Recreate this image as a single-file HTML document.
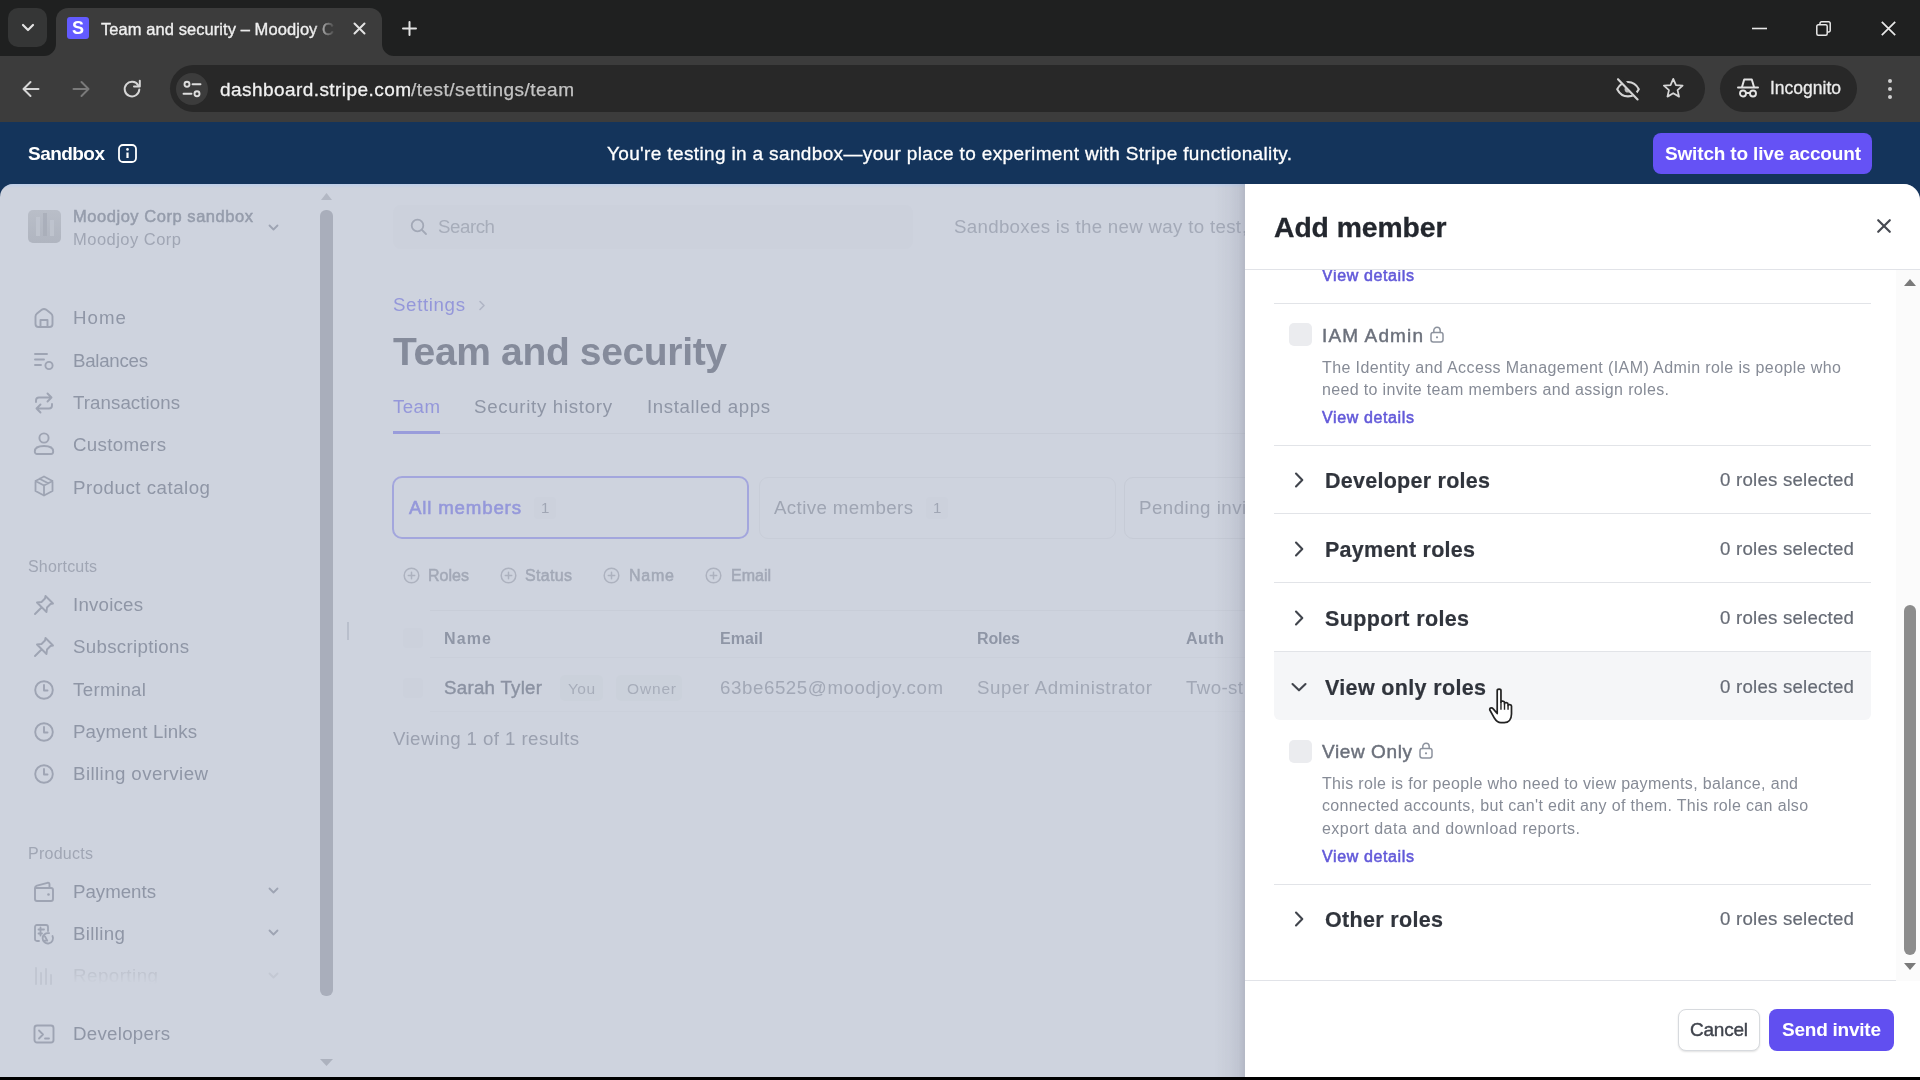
<!DOCTYPE html>
<html><head><meta charset="utf-8"><title>Team and security</title><style>
html,body{margin:0;padding:0;width:1920px;height:1080px;overflow:hidden;background:#000}
body{font-family:"Liberation Sans",sans-serif;position:relative}
.t{position:absolute;white-space:nowrap;will-change:transform}
.b{position:absolute}
svg{overflow:visible}
</style></head><body>
<div class="b" style="left:0;top:0;width:1920px;height:56px;background:#1f2020"></div>
<div class="b" style="left:8px;top:8px;width:39px;height:39px;border-radius:10px;background:#353636"></div>
<svg style="position:absolute;left:20px;top:21px;" width="16" height="14" viewBox="0 0 16 14" fill="none"><path d="M3 4 L8 9 L13 4" stroke="#e3e3e3" stroke-width="2.2" stroke-linecap="round" stroke-linejoin="round" /></svg>
<div class="b" style="left:56px;top:8px;width:326px;height:48px;border-radius:12px 12px 0 0;background:#3c3c3c"></div>
<svg class="b" style="left:44px;top:44px" width="12" height="12"><path d="M12 0 V12 H0 A12 12 0 0 0 12 0Z" fill="#3c3c3c"/></svg>
<svg class="b" style="left:382px;top:44px" width="12" height="12"><path d="M0 0 V12 H12 A12 12 0 0 1 0 0Z" fill="#3c3c3c"/></svg>
<div class="b" style="left:67px;top:17px;width:22px;height:22px;border-radius:3px;background:#635bff"></div>
<span id="fav" class="t" style="left:71.5px;top:17.0px;font-size:18px;line-height:23px;color:#ffffff;font-weight:700;letter-spacing:0.000px;">S</span>
<span id="tabtitle" class="t" style="left:101px;top:18.5px;font-size:16.5px;line-height:21px;color:#efefef;font-weight:400;letter-spacing:0.068px;-webkit-mask-image:linear-gradient(90deg,#000 91%,transparent 101%);-webkit-text-stroke:0.35px #efefef;">Team and security – Moodjoy C</span>
<svg style="position:absolute;left:353px;top:22px;" width="13" height="13" viewBox="0 0 13 13" fill="none"><path d="M1.5 1.5 L11.5 11.5 M11.5 1.5 L1.5 11.5" stroke="#e3e3e3" stroke-width="2" stroke-linecap="round" stroke-linejoin="round" /></svg>
<svg style="position:absolute;left:402px;top:21px;" width="15" height="15" viewBox="0 0 15 15" fill="none"><path d="M7.5 1 V14 M1 7.5 H14" stroke="#e3e3e3" stroke-width="2" stroke-linecap="round" stroke-linejoin="round" /></svg>
<svg style="position:absolute;left:1752px;top:27px;" width="15" height="3" viewBox="0 0 15 3" fill="none"><path d="M0 1.5 H15" stroke="#e8e8e8" stroke-width="1.6"/></svg>
<svg style="position:absolute;left:1816px;top:21px;" width="15" height="15" viewBox="0 0 15 15" fill="none"><rect x="0.8" y="3.8" width="10.4" height="10.4" rx="1.5" stroke="#e8e8e8" stroke-width="1.5"/><path d="M4 3.5 V2.3 A1.5 1.5 0 0 1 5.5 0.8 H12.7 A1.5 1.5 0 0 1 14.2 2.3 V9.5 A1.5 1.5 0 0 1 12.7 11 H11.5" stroke="#e8e8e8" stroke-width="1.5"/></svg>
<svg style="position:absolute;left:1881px;top:21px;" width="15" height="15" viewBox="0 0 15 15" fill="none"><path d="M0.8 0.8 L14.2 14.2 M14.2 0.8 L0.8 14.2" stroke="#e8e8e8" stroke-width="1.7"/></svg>
<div class="b" style="left:0;top:56px;width:1920px;height:66px;background:#3c3c3c"></div>
<svg style="position:absolute;left:22px;top:80px;" width="18" height="18" viewBox="0 0 18 18" fill="none"><path d="M16.5 9 H2 M8.5 2 L1.5 9 L8.5 16" stroke="#d6d6d6" stroke-width="2" stroke-linecap="round" stroke-linejoin="round" /></svg>
<svg style="position:absolute;left:72px;top:80px;" width="18" height="18" viewBox="0 0 18 18" fill="none"><path d="M1.5 9 H16 M9.5 2 L16.5 9 L9.5 16" stroke="#7a7a7a" stroke-width="2" stroke-linecap="round" stroke-linejoin="round" /></svg>
<svg style="position:absolute;left:122px;top:79px;" width="20" height="20" viewBox="0 0 20 20" fill="none"><path d="M16.2 6.2 A7.3 7.3 0 1 0 17.3 10.5" stroke="#d6d6d6" stroke-width="2" stroke-linecap="round" stroke-linejoin="round" /><path d="M17.8 1.8 V7.6 H12" stroke="#d6d6d6" stroke-width="2" stroke-linejoin="round" stroke-linecap="round"/></svg>
<div class="b" style="left:170px;top:65px;width:1534.5px;height:46.5px;border-radius:23.5px;background:#282828"></div>
<div class="b" style="left:175.5px;top:72.5px;width:32px;height:32px;border-radius:16px;background:#3c3c3c"></div>
<svg style="position:absolute;left:182px;top:80px;" width="20" height="18" viewBox="0 0 20 18" fill="none"><circle cx="5" cy="4.2" r="2.5" stroke="#dedede" stroke-width="1.9"/><path d="M10.5 4.2 H18.5" stroke="#dedede" stroke-width="1.9" stroke-linecap="round"/><circle cx="15" cy="13.8" r="2.5" stroke="#dedede" stroke-width="1.9"/><path d="M1.5 13.8 H9.5" stroke="#dedede" stroke-width="1.9" stroke-linecap="round"/></svg>
<span id="url1" class="t" style="left:220px;top:76.5px;font-size:19px;line-height:25px;color:#f0f0f0;font-weight:400;letter-spacing:0.436px;-webkit-text-stroke:0.3px #f0f0f0;">dashboard.stripe.com</span>
<span id="url2" class="t" style="left:411px;top:76.5px;font-size:19px;line-height:25px;color:#c4c4c4;font-weight:400;letter-spacing:0.489px;-webkit-text-stroke:0.25px #c4c4c4;">/test/settings/team</span>
<svg style="position:absolute;left:1615px;top:77px;" width="26" height="24" viewBox="0 0 26 24" fill="none"><path d="M2.2 12.2 C5 6.8 9 5 13 5 C17 5 21 6.8 23.8 12.2 C21 17.6 17 19.4 13 19.4 C9 19.4 5 17.6 2.2 12.2 Z" stroke="#d4d4d4" stroke-width="2.1" stroke-linecap="round" stroke-linejoin="round" /><circle cx="13" cy="12.2" r="3.4" fill="#bdbdbd"/><path d="M4.2 0.8 L24.2 21.8" stroke="#282828" stroke-width="5" stroke-linecap="butt"/><path d="M3 2.2 L22.6 22.4" stroke="#d4d4d4" stroke-width="2.1" stroke-linecap="round" stroke-linejoin="round" /></svg>
<svg style="position:absolute;left:1661.5px;top:77px;" width="22.5" height="21.5" viewBox="0 0 24 23" fill="none"><path d="M12 2 L14.9 8.6 L22 9.3 L16.6 14 L18.2 21 L12 17.3 L5.8 21 L7.4 14 L2 9.3 L9.1 8.6 Z" stroke="#d6d6d6" stroke-width="1.9" stroke-linecap="round" stroke-linejoin="round" /></svg>
<div class="b" style="left:1720px;top:65px;width:137px;height:46.5px;border-radius:23.5px;background:#282828"></div>
<svg style="position:absolute;left:1737px;top:77px;" width="22" height="22" viewBox="0 0 22 22" fill="none"><path d="M1 10.5 H21" stroke="#e3e3e3" stroke-width="2" stroke-linecap="round" stroke-linejoin="round" /><path d="M5 10 L7.2 2.5 H14.8 L17 10" stroke="#e3e3e3" stroke-width="2" stroke-linecap="round" stroke-linejoin="round" /><circle cx="6" cy="16.5" r="3" stroke="#e3e3e3" stroke-width="1.9"/><circle cx="16" cy="16.5" r="3" stroke="#e3e3e3" stroke-width="1.9"/><path d="M9 16 H13" stroke="#e3e3e3" stroke-width="1.9" stroke-linecap="round" stroke-linejoin="round" /></svg>
<span id="incog" class="t" style="left:1770px;top:76.5px;font-size:17.5px;line-height:23px;color:#ececec;font-weight:400;letter-spacing:-0.005px;-webkit-text-stroke:0.3px #ececec;">Incognito</span>
<div class="b" style="left:1887.5px;top:78.5px;width:4.5px;height:4.5px;border-radius:3px;background:#d0d0d0"></div>
<div class="b" style="left:1887.5px;top:86.5px;width:4.5px;height:4.5px;border-radius:3px;background:#d0d0d0"></div>
<div class="b" style="left:1887.5px;top:94.5px;width:4.5px;height:4.5px;border-radius:3px;background:#d0d0d0"></div>
<div class="b" style="left:0;top:122px;width:1920px;height:958px;background:#14345b"></div>
<div class="b" style="left:0;top:1077px;width:1920px;height:3px;background:#000"></div>
<span id="sandbox" class="t" style="left:28px;top:141.0px;font-size:19px;line-height:25px;color:#ffffff;font-weight:700;letter-spacing:-0.540px;">Sandbox</span>
<svg style="position:absolute;left:118px;top:144px;" width="19" height="19" viewBox="0 0 19 19" fill="none"><rect x="1" y="1" width="17" height="17" rx="4" stroke="#ffffff" stroke-width="1.8"/><path d="M9.5 8.5 V14" stroke="#fff" stroke-width="2.2"/><circle cx="9.5" cy="5.4" r="1.3" fill="#fff"/></svg>
<span id="banner" class="t" style="left:607px;top:141.0px;font-size:19px;line-height:25px;color:#ffffff;font-weight:400;letter-spacing:0.354px;-webkit-text-stroke:0.3px #ffffff;">You're testing in a sandbox—your place to experiment with Stripe functionality.</span>
<div class="b" style="left:1653px;top:133px;width:219px;height:41px;border-radius:8px;background:#6552f5"></div>
<span id="switch" class="t" style="left:1665px;top:141.0px;font-size:19px;line-height:25px;color:#ffffff;font-weight:700;letter-spacing:-0.169px;">Switch to live account</span>
<div class="b" style="left:0;top:184px;width:1920px;height:893px;border-radius:13px 16px 0 0;background:#ced3de"></div>
<div class="b" style="left:0;top:184px;width:1245px;height:14px;border-radius:13px 0 0 0;overflow:hidden"><div style="height:4px;background:linear-gradient(180deg,rgba(184,204,236,.75),rgba(184,204,236,0))"></div></div>
<div class="b" style="left:28px;top:210px;width:33px;height:33px;border-radius:5px;background:linear-gradient(180deg,#b9bec8,#b0b5c0)"></div>
<div class="b" style="left:36px;top:217px;width:4px;height:19px;background:#c1c6cf;opacity:.8"></div><div class="b" style="left:43px;top:213px;width:4px;height:23px;background:#a7acb8;opacity:.8"></div><div class="b" style="left:50px;top:220px;width:4px;height:16px;background:#c1c6cf;opacity:.8"></div>
<span id="acct1" class="t" style="left:73px;top:206.0px;font-size:16.5px;line-height:21px;color:#959cab;font-weight:400;letter-spacing:0.543px;-webkit-text-stroke:0.5px #959cab;">Moodjoy Corp sandbox</span>
<span id="acct2" class="t" style="left:73px;top:229.0px;font-size:16.5px;line-height:21px;color:#a0a6b4;font-weight:400;letter-spacing:0.480px;">Moodjoy Corp</span>
<svg style="position:absolute;left:268px;top:224px;" width="11" height="8" viewBox="0 0 11 8" fill="none"><path d="M1.5 1.5 L5.5 5.5 L9.5 1.5" stroke="#9ea4b3" stroke-width="1.8" stroke-linecap="round" stroke-linejoin="round" /></svg>
<div class="b" style="left:320px;top:210px;width:13px;height:786px;border-radius:6px;background:#a9aebb"></div>
<svg class="b" style="left:321px;top:193px" width="11" height="7"><path d="M0 7 L5.5 0 L11 7Z" fill="#b3b8c4"/></svg>
<svg class="b" style="left:320px;top:1059px" width="13" height="7"><path d="M0 0 L6.5 7 L13 0Z" fill="#adb2be"/></svg>
<svg style="position:absolute;left:33px;top:307px;" width="22" height="22" viewBox="0 0 22 22" fill="none"><path d="M2.5 9.5 C2.5 8 3 7.3 4 6.5 L9 2.6 C10.3 1.7 11.7 1.7 13 2.6 L18 6.5 C19 7.3 19.5 8 19.5 9.5 V17 C19.5 19 18.5 20 16.5 20 H5.5 C3.5 20 2.5 19 2.5 17 Z" stroke="#9ea4b3" stroke-width="1.9" stroke-linecap="round" stroke-linejoin="round" /><path d="M7.5 20 V13 H14.5 V20" stroke="#9ea4b3" stroke-width="1.9" stroke-linecap="round" stroke-linejoin="round" /></svg>
<span id="n1" class="t" style="left:73px;top:306.0px;font-size:18.7px;line-height:24px;color:#8f96a6;font-weight:400;letter-spacing:1.047px;">Home</span>
<svg style="position:absolute;left:33px;top:349.5px;" width="22" height="22" viewBox="0 0 22 22" fill="none"><path d="M2 4 H14 M2 9.5 H11 M2 15 H8" stroke="#9ea4b3" stroke-width="1.9" stroke-linecap="round" stroke-linejoin="round" /><circle cx="16" cy="15.5" r="3.6" stroke="#9ea4b3" stroke-width="1.9"/></svg>
<span id="n2" class="t" style="left:73px;top:348.5px;font-size:18.7px;line-height:24px;color:#8f96a6;font-weight:400;letter-spacing:-0.268px;">Balances</span>
<svg style="position:absolute;left:33px;top:391.5px;" width="22" height="22" viewBox="0 0 22 22" fill="none"><path d="M14.5 1.5 L18.5 5.5 L14.5 9.5 M18.5 5.5 H6 C4 5.5 3 6.5 3 8.5 V10" stroke="#9ea4b3" stroke-width="1.9" stroke-linecap="round" stroke-linejoin="round" /><path d="M7.5 12.5 L3.5 16.5 L7.5 20.5 M3.5 16.5 H16 C18 16.5 19 15.5 19 13.5 V12" stroke="#9ea4b3" stroke-width="1.9" stroke-linecap="round" stroke-linejoin="round" /></svg>
<span id="n3" class="t" style="left:73px;top:390.5px;font-size:18.7px;line-height:24px;color:#8f96a6;font-weight:400;letter-spacing:0.064px;">Transactions</span>
<svg style="position:absolute;left:33px;top:432px;" width="22" height="24" viewBox="0 0 22 24" fill="none"><circle cx="11" cy="6" r="4.6" stroke="#9ea4b3" stroke-width="1.9"/><path d="M1.8 19.5 C1.8 15.5 5.5 14 11 14 C16.5 14 20.2 15.5 20.2 19.5 C20.2 21.3 19 22 18 22 H4 C3 22 1.8 21.3 1.8 19.5 Z" stroke="#9ea4b3" stroke-width="1.9" stroke-linecap="round" stroke-linejoin="round" /></svg>
<span id="n4" class="t" style="left:73px;top:433.0px;font-size:18.7px;line-height:24px;color:#8f96a6;font-weight:400;letter-spacing:0.330px;">Customers</span>
<svg style="position:absolute;left:33px;top:474.0px;" width="22" height="24" viewBox="0 0 22 22" fill="none"><path d="M11 1.5 L19.5 6 V16 L11 20.5 L2.5 16 V6 Z M2.5 6 L11 10.5 L19.5 6 M11 10.5 V20.5 M6.5 3.8 L15.2 8.3" stroke="#9ea4b3" stroke-width="1.8" stroke-linecap="round" stroke-linejoin="round" /></svg>
<span id="n5" class="t" style="left:73px;top:475.5px;font-size:18.7px;line-height:24px;color:#8f96a6;font-weight:400;letter-spacing:0.510px;">Product catalog</span>
<span id="l1" class="t" style="left:28px;top:555.5px;font-size:16px;line-height:21px;color:#a0a6b4;font-weight:400;letter-spacing:0.177px;">Shortcuts</span>
<svg style="position:absolute;left:33px;top:594px;" width="22" height="22" viewBox="0 0 22 22" fill="none"><path d="M12.5 2 L20 9.5 L17.5 10 L14 13.5 L13.5 18 L4 8.5 L8.5 8 L12 4.5 Z M8.5 13.5 L2 20" stroke="#9ea4b3" stroke-width="1.9" stroke-linecap="round" stroke-linejoin="round" /></svg>
<span id="n6" class="t" style="left:73px;top:593.0px;font-size:18.7px;line-height:24px;color:#8f96a6;font-weight:400;letter-spacing:0.205px;">Invoices</span>
<svg style="position:absolute;left:33px;top:636px;" width="22" height="22" viewBox="0 0 22 22" fill="none"><path d="M12.5 2 L20 9.5 L17.5 10 L14 13.5 L13.5 18 L4 8.5 L8.5 8 L12 4.5 Z M8.5 13.5 L2 20" stroke="#9ea4b3" stroke-width="1.9" stroke-linecap="round" stroke-linejoin="round" /></svg>
<span id="n7" class="t" style="left:73px;top:635.0px;font-size:18.7px;line-height:24px;color:#8f96a6;font-weight:400;letter-spacing:0.317px;">Subscriptions</span>
<svg style="position:absolute;left:33px;top:678.5px;" width="22" height="22" viewBox="0 0 22 22" fill="none"><circle cx="11" cy="11" r="8.8" stroke="#9ea4b3" stroke-width="1.9"/><path d="M11 6 V11.5 H14.5" stroke="#9ea4b3" stroke-width="1.9" stroke-linecap="round" stroke-linejoin="round" /></svg>
<span id="n8" class="t" style="left:73px;top:677.5px;font-size:18.7px;line-height:24px;color:#8f96a6;font-weight:400;letter-spacing:0.341px;">Terminal</span>
<svg style="position:absolute;left:33px;top:720.5px;" width="22" height="22" viewBox="0 0 22 22" fill="none"><circle cx="11" cy="11" r="8.8" stroke="#9ea4b3" stroke-width="1.9"/><path d="M11 6 V11.5 H14.5" stroke="#9ea4b3" stroke-width="1.9" stroke-linecap="round" stroke-linejoin="round" /></svg>
<span id="n9" class="t" style="left:73px;top:719.5px;font-size:18.7px;line-height:24px;color:#8f96a6;font-weight:400;letter-spacing:0.119px;">Payment Links</span>
<svg style="position:absolute;left:33px;top:763px;" width="22" height="22" viewBox="0 0 22 22" fill="none"><circle cx="11" cy="11" r="8.8" stroke="#9ea4b3" stroke-width="1.9"/><path d="M11 6 V11.5 H14.5" stroke="#9ea4b3" stroke-width="1.9" stroke-linecap="round" stroke-linejoin="round" /></svg>
<span id="n10" class="t" style="left:73px;top:762.0px;font-size:18.7px;line-height:24px;color:#8f96a6;font-weight:400;letter-spacing:0.413px;">Billing overview</span>
<span id="l2" class="t" style="left:28px;top:842.5px;font-size:16px;line-height:21px;color:#a0a6b4;font-weight:400;letter-spacing:0.264px;">Products</span>
<svg style="position:absolute;left:33px;top:881px;" width="22" height="22" viewBox="0 0 22 22" fill="none"><path d="M2 7 V18 C2 19.3 2.7 20 4 20 H18 C19.3 20 20 19.3 20 18 V9 C20 7.7 19.3 7 18 7 H2 Z M2 7 C2 5.5 2.8 5 4 4.6 L14.5 1.8 C15.8 1.5 16.5 2.2 16.5 3.5 V7" stroke="#9ea4b3" stroke-width="1.9" stroke-linecap="round" stroke-linejoin="round" /><circle cx="15.5" cy="13.5" r="1.3" fill="#9ea4b3"/></svg>
<span id="n11" class="t" style="left:73px;top:880.0px;font-size:18.7px;line-height:24px;color:#8f96a6;font-weight:400;letter-spacing:-0.015px;">Payments</span>
<svg style="position:absolute;left:33px;top:923px;" width="22" height="22" viewBox="0 0 22 22" fill="none"><path d="M6 18 H4 C2.7 18 2 17.3 2 16 V4 C2 2.7 2.7 2 4 2 H13 C14.3 2 15 2.7 15 4 V8 M5.5 6.5 H11 M5.5 10.5 H9 M7.5 4.5 V12.5" stroke="#9ea4b3" stroke-width="1.8" stroke-linecap="round" stroke-linejoin="round" /><path d="M19.5 13 A5.2 5.2 0 1 1 16 10.2 M12 13.5 L14.3 17.6 L10 17.5" stroke="#9ea4b3" stroke-width="1.8" stroke-linecap="round" stroke-linejoin="round" /></svg>
<span id="n12" class="t" style="left:73px;top:922.0px;font-size:18.7px;line-height:24px;color:#8f96a6;font-weight:400;letter-spacing:0.357px;">Billing</span>
<svg style="position:absolute;left:33px;top:965px;opacity:.28;" width="22" height="22" viewBox="0 0 22 22" fill="none"><path d="M3 3 V19 M8 8 V19 M13 4 V19 M18 10 V19" stroke="#9ea4b3" stroke-width="1.9" stroke-linecap="round" stroke-linejoin="round" /></svg>
<span id="n13" class="t" style="left:73px;top:963.5px;font-size:18.7px;line-height:24px;color:#bfc4cf;font-weight:400;letter-spacing:0.495px;-webkit-mask-image:linear-gradient(180deg,#000 35%,transparent 82%);">Reporting</span>
<svg style="position:absolute;left:33px;top:1023px;" width="22" height="22" viewBox="0 0 22 22" fill="none"><rect x="1.5" y="2.5" width="19" height="17" rx="2.5" stroke="#9ea4b3" stroke-width="1.9"/><path d="M6 7.5 L10 11.5 L6 15.5 M12 15.5 H16" stroke="#9ea4b3" stroke-width="1.8" stroke-linecap="round" stroke-linejoin="round" /></svg>
<span id="n14" class="t" style="left:73px;top:1022.0px;font-size:18.7px;line-height:24px;color:#8f96a6;font-weight:400;letter-spacing:0.275px;">Developers</span>
<svg style="position:absolute;left:268px;top:887px;" width="11" height="8" viewBox="0 0 11 8" fill="none"><path d="M1.5 1.5 L5.5 5.5 L9.5 1.5" stroke="#9ea4b3" stroke-width="1.8" stroke-linecap="round" stroke-linejoin="round" /></svg>
<svg style="position:absolute;left:268px;top:929px;" width="11" height="8" viewBox="0 0 11 8" fill="none"><path d="M1.5 1.5 L5.5 5.5 L9.5 1.5" stroke="#9ea4b3" stroke-width="1.8" stroke-linecap="round" stroke-linejoin="round" /></svg>
<svg style="position:absolute;left:268px;top:972px;" width="11" height="8" viewBox="0 0 11 8" fill="none"><path d="M1.5 1.5 L5.5 5.5 L9.5 1.5" stroke="#c3c8d3" stroke-width="1.8" stroke-linecap="round" stroke-linejoin="round" /></svg>
<div class="b" style="left:347px;top:622px;width:2px;height:18px;background:#b9bfcc"></div>
<div class="b" style="left:393px;top:205px;width:520px;height:44px;border-radius:8px;background:#ccd1dc"></div>
<svg style="position:absolute;left:410px;top:218px;" width="18" height="18" viewBox="0 0 18 18" fill="none"><circle cx="7.5" cy="7.5" r="5.8" stroke="#a2a8b6" stroke-width="1.8"/><path d="M12 12 L16 16" stroke="#a2a8b6" stroke-width="1.8" stroke-linecap="round" stroke-linejoin="round" /></svg>
<span id="search" class="t" style="left:438px;top:215.0px;font-size:18.7px;line-height:24px;color:#a7adba;font-weight:400;letter-spacing:-0.444px;">Search</span>
<span id="sbx" class="t" style="left:954px;top:215.0px;font-size:18.7px;line-height:24px;color:#a4aab8;font-weight:400;letter-spacing:0.311px;">Sandboxes is the new way to test</span>
<span id="sbx2" class="t" style="left:1241.5px;top:215.0px;font-size:18.7px;line-height:24px;color:#a4aab8;font-weight:400;letter-spacing:0.000px;">,</span>
<span id="crumb" class="t" style="left:393px;top:293.0px;font-size:18.7px;line-height:24px;color:#9497da;font-weight:400;letter-spacing:0.638px;">Settings</span>
<svg style="position:absolute;left:478px;top:300px;" width="8" height="11" viewBox="0 0 8 11" fill="none"><path d="M2 1.5 L6 5.5 L2 9.5" stroke="#b0b5c5" stroke-width="1.6" stroke-linecap="round" stroke-linejoin="round" /></svg>
<span id="title" class="t" style="left:393px;top:326.0px;font-size:39px;line-height:51px;color:#858b9b;font-weight:700;letter-spacing:-0.349px;">Team and security</span>
<span id="tab1" class="t" style="left:393px;top:395.0px;font-size:18.7px;line-height:24px;color:#9497da;font-weight:400;letter-spacing:0.431px;">Team</span>
<span id="tab2" class="t" style="left:474px;top:395.0px;font-size:18.7px;line-height:24px;color:#8f96a6;font-weight:400;letter-spacing:0.684px;">Security history</span>
<span id="tab3" class="t" style="left:647px;top:395.0px;font-size:18.7px;line-height:24px;color:#8f96a6;font-weight:400;letter-spacing:0.590px;">Installed apps</span>
<div class="b" style="left:393px;top:433px;width:852px;height:1px;background:#c7ccd7"></div>
<div class="b" style="left:393px;top:431px;width:47px;height:3px;background:#999cdb"></div>
<div class="b" style="left:392px;top:476px;width:353px;height:59px;border:2px solid #a3a6dd;border-radius:10px;"></div>
<div class="b" style="left:759px;top:476.5px;width:355px;height:60.5px;border:1px solid #c8cdd8;border-radius:9px;"></div>
<div class="b" style="left:1124px;top:476.5px;width:200px;height:60.5px;border:1px solid #c6cbd6;border-radius:9px;"></div>
<span id="f1" class="t" style="left:409px;top:496.0px;font-size:18.7px;line-height:24px;color:#9598da;font-weight:400;letter-spacing:0.815px;-webkit-text-stroke:0.6px #9598da;">All members</span>
<div class="b" style="left:534px;top:497px;width:22px;height:22px;border-radius:4px;background:#ccd1dc"></div>
<span id="f1n" class="t" style="left:541px;top:498.0px;font-size:15px;line-height:20px;color:#a0a6b4;font-weight:400;letter-spacing:0.000px;">1</span>
<span id="f2" class="t" style="left:774px;top:496.0px;font-size:18.7px;line-height:24px;color:#9fa5b3;font-weight:400;letter-spacing:0.387px;">Active members</span>
<div class="b" style="left:926px;top:497px;width:22px;height:22px;border-radius:4px;background:#ccd1dc"></div>
<span id="f2n" class="t" style="left:933px;top:498.0px;font-size:15px;line-height:20px;color:#a0a6b4;font-weight:400;letter-spacing:0.000px;">1</span>
<span id="f3" class="t" style="left:1139px;top:496.0px;font-size:18.7px;line-height:24px;color:#9fa5b3;font-weight:400;letter-spacing:0.483px;">Pending inv</span>
<span id="f3b" class="t" style="left:1242.3px;top:496.0px;font-size:18.7px;line-height:24px;color:#9fa5b3;font-weight:400;letter-spacing:0.000px;">ites</span>
<svg style="position:absolute;left:402.5px;top:566.5px;" width="17" height="17" viewBox="0 0 17 17" fill="none"><circle cx="8.5" cy="8.5" r="7.3" stroke="#adb2bf" stroke-width="1.5"/><path d="M8.5 5.3 V11.7 M5.3 8.5 H11.7" stroke="#adb2bf" stroke-width="1.5" stroke-linecap="round" stroke-linejoin="round" /></svg>
<span id="c1" class="t" style="left:428px;top:564.5px;font-size:16px;line-height:21px;color:#a2a8b6;font-weight:400;letter-spacing:0.021px;-webkit-text-stroke:0.5px #a2a8b6;">Roles</span>
<svg style="position:absolute;left:499.5px;top:566.5px;" width="17" height="17" viewBox="0 0 17 17" fill="none"><circle cx="8.5" cy="8.5" r="7.3" stroke="#adb2bf" stroke-width="1.5"/><path d="M8.5 5.3 V11.7 M5.3 8.5 H11.7" stroke="#adb2bf" stroke-width="1.5" stroke-linecap="round" stroke-linejoin="round" /></svg>
<span id="c2" class="t" style="left:525px;top:564.5px;font-size:16px;line-height:21px;color:#a2a8b6;font-weight:400;letter-spacing:0.327px;-webkit-text-stroke:0.5px #a2a8b6;">Status</span>
<svg style="position:absolute;left:602.5px;top:566.5px;" width="17" height="17" viewBox="0 0 17 17" fill="none"><circle cx="8.5" cy="8.5" r="7.3" stroke="#adb2bf" stroke-width="1.5"/><path d="M8.5 5.3 V11.7 M5.3 8.5 H11.7" stroke="#adb2bf" stroke-width="1.5" stroke-linecap="round" stroke-linejoin="round" /></svg>
<span id="c3" class="t" style="left:629px;top:564.5px;font-size:16px;line-height:21px;color:#a2a8b6;font-weight:400;letter-spacing:0.771px;-webkit-text-stroke:0.5px #a2a8b6;">Name</span>
<svg style="position:absolute;left:704.5px;top:566.5px;" width="17" height="17" viewBox="0 0 17 17" fill="none"><circle cx="8.5" cy="8.5" r="7.3" stroke="#adb2bf" stroke-width="1.5"/><path d="M8.5 5.3 V11.7 M5.3 8.5 H11.7" stroke="#adb2bf" stroke-width="1.5" stroke-linecap="round" stroke-linejoin="round" /></svg>
<span id="c4" class="t" style="left:731px;top:564.5px;font-size:16px;line-height:21px;color:#a2a8b6;font-weight:400;letter-spacing:-0.002px;-webkit-text-stroke:0.5px #a2a8b6;">Email</span>
<div class="b" style="left:430px;top:610px;width:815px;height:1px;background:#c8cdd8"></div>
<div class="b" style="left:430px;top:657px;width:815px;height:1px;background:#cacfda"></div>
<div class="b" style="left:430px;top:711px;width:815px;height:1px;background:#cbd0db"></div>
<div class="b" style="left:403px;top:628px;width:20px;height:20px;border-radius:4px;background:#ccd1dc"></div>
<div class="b" style="left:403px;top:678px;width:20px;height:20px;border-radius:4px;background:#ccd1dc"></div>
<span id="h1" class="t" style="left:444px;top:627.5px;font-size:16px;line-height:21px;color:#8f96a6;font-weight:700;letter-spacing:1.140px;">Name</span>
<span id="h2" class="t" style="left:720px;top:627.5px;font-size:16px;line-height:21px;color:#8f96a6;font-weight:700;letter-spacing:0.078px;">Email</span>
<span id="h3" class="t" style="left:977px;top:627.5px;font-size:16px;line-height:21px;color:#8f96a6;font-weight:700;letter-spacing:-0.146px;">Roles</span>
<span id="h4" class="t" style="left:1186px;top:627.5px;font-size:16px;line-height:21px;color:#8f96a6;font-weight:700;letter-spacing:0.521px;">Auth</span>
<span id="r1" class="t" style="left:444px;top:676.0px;font-size:18.7px;line-height:24px;color:#8b92a2;font-weight:400;letter-spacing:0.278px;-webkit-text-stroke:0.4px #8b92a2;">Sarah Tyler</span>
<div class="b" style="left:560px;top:675px;width:43px;height:26px;border-radius:5px;background:#cbd1db"></div>
<span id="r1a" class="t" style="left:568px;top:679.0px;font-size:15.5px;line-height:20px;color:#a7adba;font-weight:400;letter-spacing:0.421px;">You</span>
<div class="b" style="left:616px;top:675px;width:66px;height:26px;border-radius:5px;background:#cbd1db"></div>
<span id="r1b" class="t" style="left:627px;top:679.0px;font-size:15.5px;line-height:20px;color:#a7adba;font-weight:400;letter-spacing:0.837px;">Owner</span>
<span id="r2" class="t" style="left:720px;top:676.0px;font-size:18.7px;line-height:24px;color:#a2a8b6;font-weight:400;letter-spacing:0.586px;">63be6525@moodjoy.com</span>
<span id="r3" class="t" style="left:977px;top:676.0px;font-size:18.7px;line-height:24px;color:#a2a8b6;font-weight:400;letter-spacing:0.605px;">Super Administrator</span>
<span id="r4" class="t" style="left:1186px;top:676.0px;font-size:18.7px;line-height:24px;color:#a2a8b6;font-weight:400;letter-spacing:0.392px;">Two-st</span>
<span id="r4b" class="t" style="left:1244.5px;top:676.0px;font-size:18.7px;line-height:24px;color:#a2a8b6;font-weight:400;letter-spacing:0.000px;">ep</span>
<span id="view" class="t" style="left:393px;top:727.0px;font-size:18.7px;line-height:24px;color:#9ba1b0;font-weight:400;letter-spacing:0.414px;">Viewing 1 of 1 results</span>
<div class="b" style="left:1215px;top:184px;width:31px;height:893px;background:linear-gradient(90deg,rgba(120,125,145,0) 0%,rgba(120,125,145,.07) 45%,rgba(120,125,145,.17) 78%,rgba(115,120,135,.32) 100%)"></div>
<div class="b" style="left:1245px;top:184px;width:675px;height:893px;border-radius:0 17px 0 0;background:#ffffff"></div>
<span id="ptitle" class="t" style="left:1274px;top:209.0px;font-size:28.3px;line-height:37px;color:#23272e;font-weight:700;letter-spacing:-0.051px;-webkit-text-stroke:0.3px #23272e;">Add member</span>
<svg style="position:absolute;left:1877px;top:219.4px;" width="14" height="14" viewBox="0 0 14 14" fill="none"><path d="M1.2 1.2 L12.8 12.8 M12.8 1.2 L1.2 12.8" stroke="#474a52" stroke-width="2.2" stroke-linecap="round" stroke-linejoin="round" /></svg>
<div class="b" style="left:1245px;top:270px;width:675px;height:711px;overflow:hidden">
</div>
<div class="b" style="left:1245px;top:269px;width:675px;height:1px;background:#e1e3e8"></div>
<div class="b" style="left:1245px;top:980px;width:675px;height:1px;background:#e1e3e8"></div>
<div class="b" style="left:1245px;top:270px;width:600px;height:30px;overflow:hidden">
<span id="vd0" class="t" style="left:77px;top:-5.5px;font-size:16px;line-height:21px;color:#6259d9;font-weight:400;letter-spacing:0.627px;-webkit-text-stroke:0.55px #6259d9;">View details</span>
</div>
<div class="b" style="left:1274px;top:303px;width:597px;height:1px;background:#e2e4e8"></div>
<div class="b" style="left:1289px;top:323px;width:23px;height:23px;border-radius:5px;background:#ebecef"></div>
<span id="iam" class="t" style="left:1322px;top:322.5px;font-size:19px;line-height:25px;color:#6b707b;font-weight:400;letter-spacing:1.141px;-webkit-text-stroke:0.45px #6b707b;">IAM Admin</span>
<svg style="position:absolute;left:1430px;top:326px;" width="14" height="17" viewBox="0 0 14 17" fill="none"><rect x="1" y="6.5" width="12" height="9.5" rx="2.2" stroke="#8d939e" stroke-width="1.5"/><path d="M3.8 6.5 V4.5 A3.2 3.2 0 0 1 10.2 4.5 V6.5" stroke="#8d939e" stroke-width="1.5" stroke-linecap="round" stroke-linejoin="round" /><circle cx="7" cy="11.3" r="1.1" fill="#8d939e"/></svg>
<span id="iamd1" class="t" style="left:1322px;top:356.5px;font-size:16px;line-height:21px;color:#868b96;font-weight:400;letter-spacing:0.397px;">The Identity and Access Management (IAM) Admin role is people who</span>
<span id="iamd2" class="t" style="left:1322px;top:379.0px;font-size:16px;line-height:21px;color:#868b96;font-weight:400;letter-spacing:0.347px;">need to invite team members and assign roles.</span>
<span id="vd1" class="t" style="left:1322px;top:407.0px;font-size:16px;line-height:21px;color:#6259d9;font-weight:400;letter-spacing:0.627px;-webkit-text-stroke:0.55px #6259d9;">View details</span>
<div class="b" style="left:1274px;top:445px;width:597px;height:1px;background:#e2e4e8"></div>
<svg style="position:absolute;left:1294px;top:472px;" width="10" height="16" viewBox="0 0 10 16" fill="none"><path d="M2 1.5 L8.3 8 L2 14.5" stroke="#41454d" stroke-width="2.1" stroke-linecap="round" stroke-linejoin="round" /></svg>
<span id="a1" class="t" style="left:1325px;top:466.6px;font-size:21.5px;line-height:28px;color:#30343c;font-weight:700;letter-spacing:0.262px;-webkit-text-stroke:0.2px #30343c;">Developer roles</span>
<span id="a1c" class="t" style="left:1720px;top:468.0px;font-size:18.7px;line-height:24px;color:#666b75;font-weight:400;letter-spacing:0.207px;-webkit-text-stroke:0.2px #666b75;">0 roles selected</span>
<div class="b" style="left:1274px;top:513px;width:597px;height:1px;background:#e2e4e8"></div>
<svg style="position:absolute;left:1294px;top:541px;" width="10" height="16" viewBox="0 0 10 16" fill="none"><path d="M2 1.5 L8.3 8 L2 14.5" stroke="#41454d" stroke-width="2.1" stroke-linecap="round" stroke-linejoin="round" /></svg>
<span id="a2" class="t" style="left:1325px;top:535.6px;font-size:21.5px;line-height:28px;color:#30343c;font-weight:700;letter-spacing:0.251px;-webkit-text-stroke:0.2px #30343c;">Payment roles</span>
<span id="a2c" class="t" style="left:1720px;top:537.0px;font-size:18.7px;line-height:24px;color:#666b75;font-weight:400;letter-spacing:0.207px;-webkit-text-stroke:0.2px #666b75;">0 roles selected</span>
<div class="b" style="left:1274px;top:582px;width:597px;height:1px;background:#e2e4e8"></div>
<svg style="position:absolute;left:1294px;top:610px;" width="10" height="16" viewBox="0 0 10 16" fill="none"><path d="M2 1.5 L8.3 8 L2 14.5" stroke="#41454d" stroke-width="2.1" stroke-linecap="round" stroke-linejoin="round" /></svg>
<span id="a3" class="t" style="left:1325px;top:604.6px;font-size:21.5px;line-height:28px;color:#30343c;font-weight:700;letter-spacing:0.352px;-webkit-text-stroke:0.2px #30343c;">Support roles</span>
<span id="a3c" class="t" style="left:1720px;top:606.0px;font-size:18.7px;line-height:24px;color:#666b75;font-weight:400;letter-spacing:0.207px;-webkit-text-stroke:0.2px #666b75;">0 roles selected</span>
<div class="b" style="left:1274px;top:651px;width:597px;height:1px;background:#e2e4e8"></div>
<div class="b" style="left:1274px;top:652px;width:597px;height:68px;border-radius:0 0 6px 6px;background:#f5f6f8"></div>
<svg style="position:absolute;left:1291px;top:682px;" width="16" height="10" viewBox="0 0 16 10" fill="none"><path d="M1.5 2 L8 8.3 L14.5 2" stroke="#41454d" stroke-width="2.1" stroke-linecap="round" stroke-linejoin="round" /></svg>
<span id="a4" class="t" style="left:1325px;top:673.6px;font-size:21.5px;line-height:28px;color:#30343c;font-weight:700;letter-spacing:0.347px;-webkit-text-stroke:0.2px #30343c;">View only roles</span>
<span id="a4c" class="t" style="left:1720px;top:675.0px;font-size:18.7px;line-height:24px;color:#666b75;font-weight:400;letter-spacing:0.207px;-webkit-text-stroke:0.2px #666b75;">0 roles selected</span>
<div class="b" style="left:1289px;top:740px;width:23px;height:23px;border-radius:5px;background:#ebecef"></div>
<span id="vo" class="t" style="left:1322px;top:739.0px;font-size:19px;line-height:25px;color:#6b707b;font-weight:400;letter-spacing:0.601px;-webkit-text-stroke:0.45px #6b707b;">View Only</span>
<svg style="position:absolute;left:1419px;top:742px;" width="14" height="17" viewBox="0 0 14 17" fill="none"><rect x="1" y="6.5" width="12" height="9.5" rx="2.2" stroke="#8d939e" stroke-width="1.5"/><path d="M3.8 6.5 V4.5 A3.2 3.2 0 0 1 10.2 4.5 V6.5" stroke="#8d939e" stroke-width="1.5" stroke-linecap="round" stroke-linejoin="round" /><circle cx="7" cy="11.3" r="1.1" fill="#8d939e"/></svg>
<span id="vod1" class="t" style="left:1322px;top:772.5px;font-size:16px;line-height:21px;color:#868b96;font-weight:400;letter-spacing:0.333px;">This role is for people who need to view payments, balance, and</span>
<span id="vod2" class="t" style="left:1322px;top:795.0px;font-size:16px;line-height:21px;color:#868b96;font-weight:400;letter-spacing:0.347px;">connected accounts, but can't edit any of them. This role can also</span>
<span id="vod3" class="t" style="left:1322px;top:817.5px;font-size:16px;line-height:21px;color:#868b96;font-weight:400;letter-spacing:0.474px;">export data and download reports.</span>
<span id="vd2" class="t" style="left:1322px;top:846.0px;font-size:16px;line-height:21px;color:#6259d9;font-weight:400;letter-spacing:0.627px;-webkit-text-stroke:0.55px #6259d9;">View details</span>
<div class="b" style="left:1274px;top:884px;width:597px;height:1px;background:#e2e4e8"></div>
<svg style="position:absolute;left:1294px;top:911px;" width="10" height="16" viewBox="0 0 10 16" fill="none"><path d="M2 1.5 L8.3 8 L2 14.5" stroke="#41454d" stroke-width="2.1" stroke-linecap="round" stroke-linejoin="round" /></svg>
<span id="a5" class="t" style="left:1325px;top:905.6px;font-size:21.5px;line-height:28px;color:#30343c;font-weight:700;letter-spacing:0.329px;-webkit-text-stroke:0.2px #30343c;">Other roles</span>
<span id="a5c" class="t" style="left:1720px;top:907.0px;font-size:18.7px;line-height:24px;color:#666b75;font-weight:400;letter-spacing:0.207px;-webkit-text-stroke:0.2px #666b75;">0 roles selected</span>
<div class="b" style="left:1896px;top:270px;width:24px;height:711px;background:#fbfbfb"></div>
<div class="b" style="left:1904px;top:605px;width:12px;height:350px;border-radius:6px;background:#8c8c8c"></div>
<svg class="b" style="left:1904px;top:279px" width="12" height="7"><path d="M0 7 L6 0 L12 7Z" fill="#7a7a7a"/></svg>
<svg class="b" style="left:1904px;top:963px" width="12" height="7"><path d="M0 0 L6 7 L12 0Z" fill="#7a7a7a"/></svg>
<div class="b" style="left:1678px;top:1009px;width:80px;height:40px;border-radius:8px;border:1px solid #d7dade;background:#fff;box-shadow:0 1px 2px rgba(0,0,0,.12)"></div>
<span id="cancel" class="t" style="left:1690px;top:1016.7px;font-size:19px;line-height:25px;color:#40444d;font-weight:400;letter-spacing:-0.231px;-webkit-text-stroke:0.4px #40444d;">Cancel</span>
<div class="b" style="left:1769px;top:1008.5px;width:124.5px;height:42px;border-radius:8px;background:#614ff0"></div>
<span id="send" class="t" style="left:1782px;top:1016.7px;font-size:19px;line-height:25px;color:#ffffff;font-weight:700;letter-spacing:-0.236px;">Send invite</span>
<svg class="b" style="left:1487px;top:687px" width="29" height="39" viewBox="0 0 27 36"><path d="M9.5 3.2 C9.5 1.4 13 1.4 13 3.2 V14 C13 12.6 16.3 12.6 16.3 14.3 V15.4 C16.3 14 19.6 14 19.6 15.8 V17 C19.6 15.8 22.8 15.8 22.8 17.6 V25 C22.8 30 20 33 16 33 H13 C10 33 8.5 31.5 7 29 L2.8 21.5 C1.8 19.8 4.2 18.3 5.6 20 L9.5 24.5 Z" fill="#fff" stroke="#222" stroke-width="1.6" stroke-linejoin="round"/><path d="M13 14 V21 M16.3 15.4 V21 M19.6 17 V21" stroke="#222" stroke-width="1.3"/></svg>
</body></html>
